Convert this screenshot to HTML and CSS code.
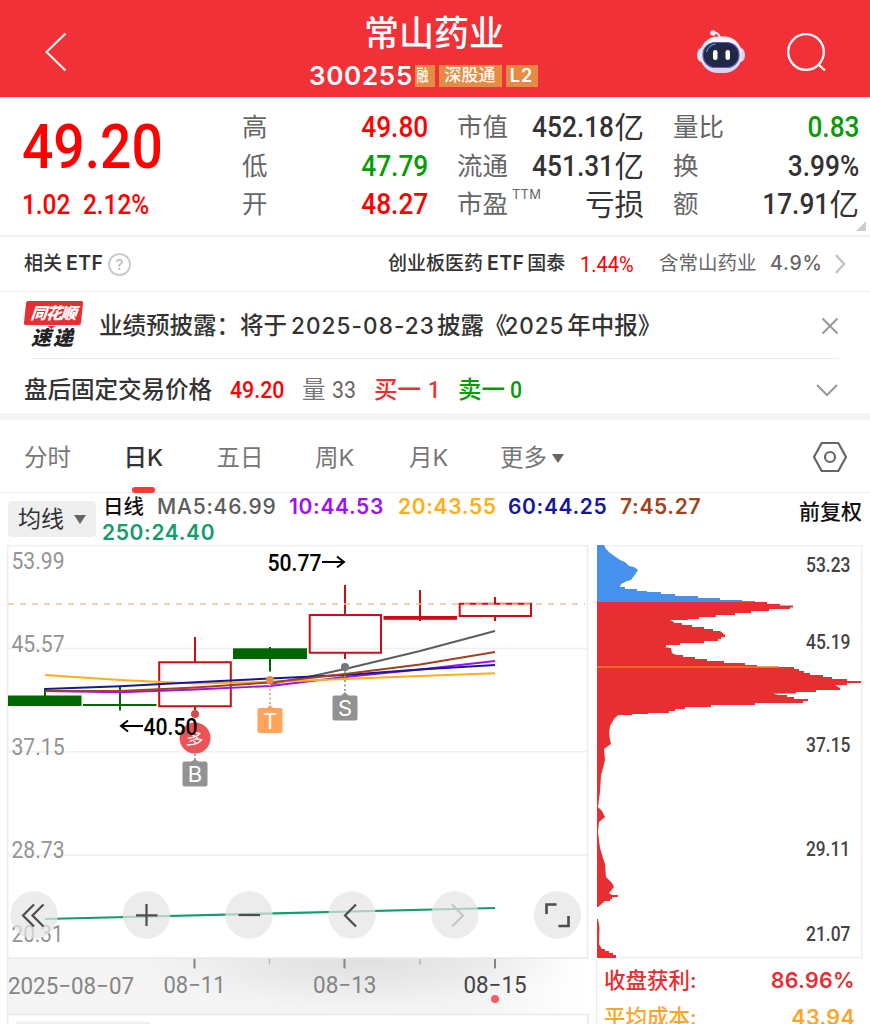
FILE: index.html
```html
<!DOCTYPE html>
<html lang="zh-CN">
<head>
  <meta charset="UTF-8" />
  <meta name="viewport" content="width=device-width, initial-scale=1" />
  <title>常山药业 300255</title>
  <link rel="stylesheet" href="styles.css">
</head>
<body>
  <header class="header">
    <svg class="back" width="24" height="40" viewBox="0 0 24 40"><path d="M21.500 1.500L2.500 20L21.500 38.500" /></svg>
    <div class="title">
      <h1>常山药业</h1>
      <div class="code">
        <span class="code-num">300255</span>
        <span class="tag tag-rong"><i>融</i></span>
        <span class="tag tag-sgt">深股通</span>
        <span class="tag tag-l2">L2</span>
      </div>
    </div>
    <div class="header-icons">
      <svg width="50" height="46" viewBox="0 0 50 46">
        <defs>
          <linearGradient id="head" x1="0" y1="0" x2="0" y2="1">
            <stop offset="0" stop-color="#fff" />
            <stop offset="1" stop-color="#d3d3f2" />
          </linearGradient>
        </defs>
        <path d="M17 4Q23 3 24 9" fill="none" stroke="#eceaf6" stroke-width="2" />
        <circle cx="17" cy="4" r="2.800" fill="#f5eef8" />
        <ellipse cx="5.500" cy="26" rx="4.500" ry="7" fill="#e4e2f7" />
        <ellipse cx="44.500" cy="26" rx="4.500" ry="7" fill="#d9d6f2" />
        <rect x="4" y="7.500" width="42" height="36.500" rx="18" fill="url(#head)" />
        <rect x="7" y="13.500" width="36" height="25" rx="12" fill="#202747" stroke="#6557c8" stroke-width="1.200" />
        <path d="M10.500 23Q12.500 16 19.500 15" fill="none" stroke="#68bcda" />
        <rect x="17" y="21" width="4.500" height="10" rx="2.200" fill="#fff" />
        <rect x="29.500" y="21" width="4.500" height="10" rx="2.200" fill="#fff" />
      </svg>
      <svg width="42" height="42" viewBox="0 0 42 42">
        <circle cx="20" cy="20" r="17.800" fill="none" stroke="#fff" stroke-width="2.300" />
        <path d="M32 32L39 38.500" stroke="#fff" stroke-width="2.300" />
      </svg>
    </div>
  </header>

  <section class="quote">
    <div class="price">
      <div class="price-main"><span class="num">49.20</span></div>
      <div class="price-chg"><span class="num">1.02</span><span class="num">2.12%</span></div>
    </div>
    <dl class="stats stats-a">
      <div><dt>高</dt><dd class="red"><span class="num">49.80</span></dd></div>
      <div><dt>低</dt><dd class="green"><span class="num">47.79</span></dd></div>
      <div><dt>开</dt><dd class="red"><span class="num">48.27</span></dd></div>
    </dl>
    <dl class="stats stats-b">
      <div><dt>市值</dt><dd><span class="num">452.18</span>亿</dd></div>
      <div><dt>流通</dt><dd><span class="num">451.31</span>亿</dd></div>
      <div><dt>市盈<sup>TTM</sup></dt><dd>亏损</dd></div>
    </dl>
    <dl class="stats stats-c">
      <div><dt>量比</dt><dd class="green"><span class="num">0.83</span></dd></div>
      <div><dt>换</dt><dd><span class="num">3.99%</span></dd></div>
      <div><dt>额</dt><dd><span class="num">17.91</span>亿</dd></div>
    </dl>
    <span class="corner"></span>
  </section>

  <section class="etf">
    <span class="etf-label">相关<b>ETF</b></span>
    <span class="help">?</span>
    <span class="etf-name">创业板医药<b>ETF</b>国泰</span>
    <span class="num etf-pct">1.44%</span>
    <span class="etf-has">含常山药业</span>
    <span class="etf-ratio">4.9%</span>
    <svg width="12" height="20" viewBox="0 0 12 20"><path d="M2 1L10 10L2 19" fill="none" stroke="#c4c4c4" stroke-width="2.500" /></svg>
  </section>

  <section class="news">
    <div class="logo">
      <span class="logo-top">同花顺</span>
      <span class="logo-bottom">速递</span>
    </div>
    <p>业绩预披露：将于<b class="news-date">2025-08-23</b>披露《<b class="news-year">2025</b>年中报》</p>
    <svg width="18" height="18" viewBox="0 0 18 18"><path d="M1.500 1.500L16.500 16.500M16.500 1.500L1.500 16.500" stroke="#999" stroke-width="2" /></svg>
  </section>

  <section class="after">
    <span class="after-label">盘后固定交易价格</span>
    <span class="num after-price">49.20</span>
    <span class="vol">量</span><span class="num vol-num">33</span>
    <span class="buy">买一</span><span class="num buy-num">1</span>
    <span class="sell">卖一</span><span class="num sell-num">0</span>
    <svg width="24" height="14" viewBox="0 0 24 14"><path d="M2 2L12 12L22 2" fill="none" stroke="#999" stroke-width="2" /></svg>
  </section>

  <nav class="tabs">
    <a>分时</a>
    <a class="active">日K</a>
    <a>五日</a>
    <a>周K</a>
    <a>月K</a>
    <a class="more">更多<i></i></a>
    <svg width="36" height="32" viewBox="0 0 36 32">
      <path d="M9.700 2H26.300L34 16L26.300 30H9.700L2 16Z" fill="none" stroke="#666" stroke-width="2.200" stroke-linejoin="round" />
      <circle cx="18" cy="16" r="5" fill="none" stroke="#666" stroke-width="2.200" />
    </svg>
  </nav>

  <section class="legend">
    <button class="ma-btn">均线<i></i></button>
    <div class="ma">
      <span class="ma-day">日线</span>
      <span class="ma5">MA5:46.99</span>
      <span class="ma10">10:44.53</span>
      <span class="ma20">20:43.55</span>
      <span class="ma60">60:44.25</span>
      <span class="ma7">7:45.27</span>
      <span class="ma250">250:24.40</span>
    </div>
    <span class="fq">前复权</span>
  </section>

  <main class="charts">
    <svg class="kline" width="590" height="479" viewBox="0 545 590 479">
      <defs>
        <linearGradient id="axisbg">
          <stop offset="0" stop-color="#f4f4f4" />
          <stop offset=".8" stop-color="#f4f4f4" />
          <stop offset="1" stop-color="#fff" />
        </linearGradient>
        <radialGradient id="shade" cx=".5" cy="0" r=".5" gradientTransform="scale(1 1.900)">
          <stop offset="0" stop-color="#d8d8d8" stop-opacity=".75" />
          <stop offset=".5" stop-color="#dedede" stop-opacity=".5" />
          <stop offset="1" stop-color="#e6e6e6" stop-opacity="0" />
        </radialGradient>
      </defs>

      <!-- grid -->
      <g stroke="#ececec" stroke-width="1.500" fill="none">
        <path d="M8 648.500H587M8 751.700H587M8 855H587" stroke="#f0f0f0" />
        <path d="M7.700 1024V545.500H587.500V958" />
      </g>
      <rect x="8" y="958" width="580" height="56" fill="url(#axisbg)" />
      <rect x="140" y="958" width="440" height="56" fill="url(#shade)" />
      <path d="M8 958H588M8 1014.500H588V1024" stroke="#e9e9e9" stroke-width="1.500" fill="none" />
      <rect x="15" y="1021.500" width="136" height="20" rx="4" fill="#efefef" />

      <g class="ylabels">
        <text x="11.500" y="568.500" textLength="53" lengthAdjust="spacingAndGlyphs">53.99</text>
        <text x="11.500" y="652" textLength="53" lengthAdjust="spacingAndGlyphs">45.57</text>
        <text x="11.500" y="755" textLength="53" lengthAdjust="spacingAndGlyphs">37.15</text>
        <text x="11.500" y="858" textLength="53" lengthAdjust="spacingAndGlyphs">28.73</text>
        <text x="11.500" y="942" textLength="52" lengthAdjust="spacingAndGlyphs">20.31</text>
      </g>

      <!-- candles -->
      <g fill="#006600">
        <rect x="8" y="695.500" width="73.500" height="10.500" />
        <rect x="44" y="688" width="2" height="9" />
        <rect x="83" y="704" width="73.500" height="2" />
        <rect x="119" y="687" width="2" height="23.500" />
        <rect x="233" y="648.300" width="74" height="10.700" />
        <rect x="269" y="647" width="2" height="24.500" />
      </g>
      <g fill="none" stroke="#cc0e14" stroke-width="2">
        <path d="M159.200 662.200H230.800V706.200H159.200ZM195 637V662M195 706V711" />
        <path d="M309.700 615H381V652.800H309.700ZM345 585V615M345 653V659" />
        <path d="M420 590V621" />
        <rect x="384.500" y="617" width="71.500" height="1.800" fill="#cc0e14" />
        <path d="M459.700 603.800H531V616H459.700ZM495 597V604M495 616V621" />
      </g>
      <path d="M8 604H585" stroke="#e5c7a0" stroke-width="1.500" stroke-dasharray="6 6" />

      <!-- moving averages -->
      <g fill="none" stroke-width="1.900">
        <path d="M270 684L308 677L345 669L420 651L495 631" stroke="#5c5c5c" />
        <path d="M45 691L120 692.300L195 689.500L270 686L345 677L420 669.500L495 661" stroke="#9a12f5" />
        <path d="M45 675L120 680L195 683.500L270 682L345 679L420 676L495 673.300" stroke="#ffae18" />
        <path d="M45 689L120 686.300L195 682.300L270 678.500L345 675L420 669.500L495 665" stroke="#17179a" />
        <path d="M45 691L120 691L195 687.500L270 682.500L345 674L420 664.500L495 652" stroke="#a1421b" />
        <path d="M45 919L495 908" stroke="#159c6c" stroke-width="2.200" />
      </g>

      <!-- trade marks -->
      <g class="marks">
        <circle cx="195" cy="714" r="4" fill="#d64a4d" />
        <circle cx="195" cy="738" r="15.500" fill="#ee5255" />
        <text class="duo" x="195" y="745" transform="rotate(8 195 738)">多</text>
        <path d="M195 746V760" stroke="#888" stroke-width="1.500" stroke-dasharray="2 2" />
        <path d="M191 762L195 759L199 762Z" fill="#929292" />
        <rect x="182.500" y="761.500" width="25" height="25" rx="2" fill="#929292" />
        <text x="195" y="782">B</text>
        <circle cx="270" cy="680" r="4" fill="#eb8a45" />
        <path d="M270 684V706" stroke="#f3a66a" stroke-width="1.800" stroke-dasharray="2 2.500" />
        <rect x="257.500" y="708" width="25" height="25" rx="2" fill="#ffa45a" />
        <path d="M266 709L270 705L274 709Z" fill="#ffa45a" />
        <text x="270" y="728.500">T</text>
        <circle cx="345" cy="667" r="4" fill="#777" />
        <path d="M345 671V694" stroke="#999" stroke-width="1.800" stroke-dasharray="2 2.500" />
        <rect x="332.500" y="695.500" width="25" height="25" rx="2" fill="#929292" />
        <path d="M341 696L345 692L349 696Z" fill="#929292" />
        <text x="345" y="716">S</text>
      </g>
      <g class="extremes">
        <text x="267.500" y="570.500" textLength="54" lengthAdjust="spacingAndGlyphs">50.77</text>
        <path d="M322 562H344M337 556.500L344 562L337 567.500" />
        <text x="143.500" y="734.500" textLength="54" lengthAdjust="spacingAndGlyphs">40.50</text>
        <path d="M143 726H121M128 720.500L121 726L128 731.500" />
      </g>

      <!-- floating buttons -->
      <g fill="#e4e4e4" fill-opacity=".72">
        <circle cx="34" cy="915" r="23.700" />
        <circle cx="146.500" cy="915" r="23.700" />
        <circle cx="249" cy="915" r="23.700" />
        <circle cx="352" cy="915" r="23.700" />
        <circle cx="455" cy="915" r="23.700" />
        <circle cx="557.500" cy="915" r="23.700" />
      </g>
      <g fill="none" stroke="#4c4c4c" stroke-width="2.200">
        <path d="M34 904.500L23 915.500L34 926.500M43.500 904.500L32.500 915.500L43.500 926.500" />
        <path d="M136 915.300H157.500M146.500 904V926" />
        <path d="M238.500 915H260" />
        <path d="M356 904.500L345 915.500L356 926.500" />
        <path d="M452 904.500L463 915.500L452 926.500" stroke="#c6c6c6" />
        <path d="M546.500 914V904.500H556.500M568.500 916V926H558.500" stroke-width="2.600" />
      </g>

      <!-- date axis -->
      <path d="M194.500 959V968.500M344.500 959V968.500M495 959V968.500" stroke="#858585" stroke-width="2" />
      <path d="M269.500 959V964.500M420 959V964.500" stroke="#b5b5b5" stroke-width="1.500" />
      <g class="dates">
        <text x="8" y="993.500" textLength="126" lengthAdjust="spacingAndGlyphs">2025−08−07</text>
        <text x="163.500" y="993" textLength="62" lengthAdjust="spacingAndGlyphs">08−11</text>
        <text x="313" y="993" textLength="63.500" lengthAdjust="spacingAndGlyphs">08−13</text>
        <text x="463.500" y="993" textLength="63" lengthAdjust="spacingAndGlyphs" class="today">08−15</text>
      </g>
      <circle cx="495" cy="999" r="4" fill="#f55b5f" />
    </svg>

    <div class="chips">
      <svg width="280" height="414" viewBox="590 545 280 414">
        <path d="M597 545.500H861.500V959M597 957.500H861.500" fill="none" stroke="#f0f0f0" stroke-width="1.500" />
        <path fill="#4690ee" d="M597 545H604L606 549L610 553L613 555L620 560L625 562L629 566L634 567L638 570L636 573L631 580L627 581L621 584L620 587H625V589H637V591H647V592H661V594H675V596H698V598H720V600H742V601H755V602H597Z" />
        <path fill="#e72e30" d="M597 602H767V604H780V605.500H793V607.500H790V609H769V611H751V613H735V615H716V617H699V619H688V620H670L674 622V623H682V625H692V627H704V629H713V631H720L725 635V637H721V639H718V641H704V643H680V645H666V647H664L671 648L672 653L676 655H683V657H695V659H707V661H724V663H745V665H757V667H794V669H799V671H804V673H810V675H823V677H832V679H847V681H861V683H847V685H835L840 688V690H816V692H796V693.500H773L778 695H787V697H794V699H808V701H803V703H755V705H711V707H685V709H675V711H669V713H648V714H632V715H618L614 719L610 726L609 733L610 740L611 744L604 749L605 760L603 768L601 775L600 792L598 807L602 811L605 817L599 822L598 832L600 848L603 858L605 864L606 877L612 883L614 887L609 893L612 895H618V897H612V899H610V901H605L598 907H597Z" />
        <path fill="#e72e30" d="M597 919H598L599.500 928L599 944L602 949H605V951H609V953H613V955H616V958H597Z" />
        <path d="M597 667H779" stroke="#fb7b21" stroke-width="1.700" />
        <g class="chip-labels">
          <text x="806" y="571.500" textLength="44.500" lengthAdjust="spacingAndGlyphs">53.23</text>
          <text x="806" y="649" textLength="44.500" lengthAdjust="spacingAndGlyphs">45.19</text>
          <text x="806" y="752" textLength="44.500" lengthAdjust="spacingAndGlyphs">37.15</text>
          <text x="806" y="855.500" textLength="44" lengthAdjust="spacingAndGlyphs">29.11</text>
          <text x="806" y="941" textLength="44.500" lengthAdjust="spacingAndGlyphs">21.07</text>
        </g>
      </svg>
      <div class="chip-row profit"><span>收盘获利:</span><b>86.96%</b></div>
      <div class="chip-row cost"><span>平均成本:</span><b>43.94</b></div>
    </div>
  </main>
</body>
</html>
```
FILE: styles.css
```css
* {
  box-sizing: border-box;
}

body {
  margin: 0;
  width: 870px;
  height: 1024px;
  overflow: hidden;
  background: #fff;
  color: #333;
  font-family: Inter, "Noto Sans CJK SC", sans-serif;
  font-size: 24px;
  line-height: 1;
}

h1, p, dl, dd {
  margin: 0;
}

b {
  font-weight: 600;
}

i {
  font-style: normal;
}

svg {
  display: block;
  flex: none;
}

.red {
  color: #ff0000;
}

.green {
  color: #089b08;
}

/* narrow digits */
.num {
  display: inline-block;
  font-family: Roboto, sans-serif;
  font-weight: 500;
  transform: scaleX(.89);
  transform-origin: left;
}

/* header */
.header {
  display: grid;
  grid-template-columns: 300px 1fr 174px;
  height: 97px;
  background: #f23038;
  color: #fff;
}

.back {
  margin: 32px 0 0 44px;
  fill: none;
  stroke: #fff;
  stroke-width: 2;
}

.title h1 {
  padding: 15px 0 0 64px;
  font-size: 35px;
  font-weight: 500;
  line-height: 36px;
  white-space: nowrap;
}

.code {
  display: flex;
  align-items: center;
  padding: 12px 0 0 9px;
  line-height: 26px;
}

.code-num {
  width: 105.5px;
  font-size: 26px;
  font-weight: 600;
  letter-spacing: .7px;
  white-space: nowrap;
}

.tag {
  height: 22px;
  background: #e68b43;
  font-size: 17px;
  font-weight: 500;
  line-height: 21px;
  text-align: center;
  white-space: nowrap;
}

.tag-rong {
  width: 20px;
  margin-right: 4px;
}

.tag-rong i {
  display: block;
  font-size: 16px;
  transform: scaleX(.75);
  transform-origin: left;
}

.tag-sgt {
  width: 63px;
  margin-right: 4px;
}

.tag-l2 {
  width: 32px;
  font-size: 18px;
  font-weight: 600;
  letter-spacing: 1px;
}

.header-icons {
  display: flex;
  gap: 40px;
  padding-top: 29px;
}

.header-icons svg + svg {
  margin-top: 3px;
}

/* quote */
.quote {
  position: relative;
  display: flex;
  height: 140px;
  border-bottom: 2px solid #f1f1f1;
}

.price {
  width: 242px;
  padding: 17px 0 0 22px;
  color: #ff0000;
}

.price-main {
  height: 64px;
  font-size: 62px;
  line-height: 64px;
}

.price-chg {
  display: flex;
  gap: 5px;
  padding-top: 11px;
  font-size: 28px;
  line-height: 32px;
}

.price-chg .num {
  transform: scaleX(.87);
}

.stats {
  padding-top: 11px;
}

.stats > div {
  display: flex;
  justify-content: space-between;
  align-items: center;
  height: 38.5px;
}

.stats dt {
  color: #666;
  font-size: 25.5px;
  line-height: 38px;
  white-space: nowrap;
}

.stats dd {
  display: flex;
  align-items: center;
  font-size: 29.5px;
  line-height: 38px;
  white-space: nowrap;
}

.stats .num {
  transform-origin: right;
}

.stats-a {
  width: 186px;
}

.stats-b {
  width: 187px;
  margin-left: 29px;
}

.stats-c {
  width: 186px;
  margin-left: 29px;
}

.stats sup {
  position: relative;
  top: -5px;
  margin-left: 4px;
  font-size: 13px;
  letter-spacing: .2px;
  line-height: 0;
}

.corner {
  position: absolute;
  right: 4px;
  bottom: 4px;
  border-left: 10px solid transparent;
  border-bottom: 10px solid #ccc;
}

/* related etf */
.etf {
  display: flex;
  align-items: center;
  height: 55px;
  padding-left: 24px;
  border-bottom: 1.5px solid #efefef;
  font-size: 19px;
  font-weight: 500;
  white-space: nowrap;
}

.etf b {
  margin-left: 4px;
  font-size: 19.5px;
  letter-spacing: .4px;
}

.etf-label {
  width: 84px;
}

.help {
  width: 23px;
  height: 23px;
  border: 2px solid #ccc;
  border-radius: 50%;
  color: #bbb;
  font-size: 15px;
  line-height: 19px;
  text-align: center;
}

.etf-name {
  width: 192px;
  margin-left: 257px;
}

.etf-name b {
  margin-right: 3px;
}

.etf-pct {
  width: 79px;
  color: #ff0000;
  font-size: 22.5px;
  font-weight: 400;
}

.etf-has {
  width: 111px;
  color: #666;
  font-weight: 400;
  font-size: 19.5px;
}

.etf-ratio {
  width: 64px;
  color: #666;
  font-size: 19.5px;
  font-weight: 500;
  letter-spacing: .8px;
}

/* news */
.news {
  display: flex;
  align-items: center;
  height: 67px;
  margin: 0 31px 0 25px;
  background: linear-gradient(#ececec, #ececec) 7px 100% / 100% 1.5px no-repeat;
}

.logo {
  display: flex;
  flex-direction: column;
  width: 57px;
  height: 50px;
  margin-right: 17px;
  font-style: italic;
  font-weight: 900;
}

.logo-top {
  position: relative;
  height: 25px;
  background: #e72e32;
  border-radius: 2px;
  color: #fff;
  font-size: 16px;
  line-height: 24px;
  letter-spacing: -1px;
  text-align: center;
  transform: skewX(-6deg);
}

.logo-top::after {
  content: "";
  position: absolute;
  left: 24px;
  top: 25px;
  border: 4px solid transparent;
  border-top: 3px solid #e72e32;
  border-bottom: 0;
}

.logo-bottom {
  padding-left: 6px;
  color: #222;
  font-size: 20px;
  line-height: 27px;
  letter-spacing: 2px;
}

.news p {
  flex: 1;
  font-size: 23.5px;
  font-weight: 500;
  white-space: nowrap;
}

.news b {
  font-size: 22.5px;
  font-weight: 500;
}

.news .news-date {
  margin: 0 2px 0 4px;
  letter-spacing: 1.1px;
}

.news .news-year {
  margin: 0 3px 0 -3px;
  letter-spacing: .9px;
}

/* after hours */
.after {
  display: flex;
  align-items: center;
  height: 61px;
  padding: 1px 31px 0 24px;
  box-shadow: inset 0 -7px #f4f4f4;
  font-size: 23.5px;
  white-space: nowrap;
}

.after-label {
  width: 206px;
  font-weight: 500;
}

.after .num {
  font-size: 24.5px;
  transform: scaleX(.87);
}

.after-price {
  width: 72px;
  color: #ff0000;
}

.vol {
  width: 30px;
  color: #777;
}

.after .vol-num {
  width: 42px;
  color: #666;
  font-weight: 400;
}

.buy {
  width: 54px;
  color: #e93030;
  font-weight: 500;
}

.buy-num {
  width: 30px;
  color: #e93030;
}

.sell {
  width: 52px;
  color: #089b08;
  font-weight: 500;
}

.sell-num {
  color: #089b08;
}

.after svg {
  margin-left: auto;
}

/* tabs */
.tabs {
  display: flex;
  align-items: center;
  height: 73px;
  padding: 2px 22px 0 24px;
  border-bottom: 1.5px solid #efefef;
  color: #777;
  font-size: 23.5px;
  white-space: nowrap;
}

.tabs a {
  width: 97.5px;
  line-height: 71px;
}

.tabs a.active {
  position: relative;
  width: 95px;
  padding-left: 2px;
  color: #333;
  font-weight: 500;
}

.active::after {
  content: "";
  position: absolute;
  left: 10px;
  bottom: 0;
  width: 23px;
  height: 6px;
  border-radius: 3px;
  background: #fa3a35;
}

.tabs a:nth-child(3) {
  width: 98.5px;
}

.tabs a:nth-child(4) {
  width: 94px;
}

.tabs a:nth-child(5) {
  width: 91px;
}

.tabs svg {
  margin-left: auto;
}

.more i,
.ma-btn i {
  display: inline-block;
  margin-left: 5px;
  border: 6.5px solid transparent;
  border-top: 9px solid #666;
  border-bottom: 0;
  vertical-align: 3px;
}

/* legend */
.legend {
  display: flex;
  height: 52px;
  padding: 0 8px;
}

.ma-btn {
  width: 88px;
  height: 36px;
  margin: 8px 7px 0 0;
  padding: 0;
  border: 0;
  border-radius: 4px;
  background: #efefef;
  color: #333;
  font-family: inherit;
  font-size: 23px;
  line-height: 36px;
  white-space: nowrap;
}

.ma-btn i {
  margin-left: 10px;
}

.ma {
  display: flex;
  flex-wrap: wrap;
  align-content: flex-start;
  width: 610px;
  padding-top: 1px;
  font-size: 21px;
  font-weight: 600;
  letter-spacing: .65px;
  line-height: 25.5px;
}

.ma-day {
  width: 54px;
  color: #111;
  font-size: 20.5px;
  font-weight: 500;
  letter-spacing: 0;
}

.ma5 {
  width: 132px;
  color: #5c5c5c;
  font-weight: 500;
  letter-spacing: .8px;
}

.ma10 {
  width: 109px;
  color: #9a12f5;
}

.ma20 {
  width: 110px;
  color: #ffae18;
}

.ma60 {
  width: 112px;
  color: #17179a;
}

.ma7 {
  color: #a1421b;
}

.ma250 {
  margin-left: -1px;
  color: #159c6c;
}

.fq {
  margin-left: auto;
  color: #111;
  font-size: 21px;
  font-weight: 500;
  line-height: 37px;
}

/* charts */
.charts {
  display: flex;
}

.kline text,
.chips text {
  font-family: Roboto, sans-serif;
  font-size: 23.5px;
}

.ylabels {
  fill: #949494;
}

.kline .marks text {
  fill: #fff;
  font-family: Inter, "Noto Sans CJK SC", sans-serif;
  font-size: 22px;
  text-anchor: middle;
}

.kline .marks .duo {
  font-size: 17px;
}

.extremes text {
  fill: #000;
  font-weight: 500;
}

.extremes path {
  fill: none;
  stroke: #000;
  stroke-width: 2;
}

.dates {
  fill: #858585;
}

.dates .today {
  fill: #444;
}

.chips .chip-labels text {
  fill: #444;
  font-size: 20.5px;
  font-weight: 500;
}

.chip-row {
  display: flex;
  justify-content: space-between;
  height: 37px;
  margin-left: 6px;
  padding: 0 15px 0 7px;
  border-left: 1.5px solid #ececec;
  font-size: 21.5px;
  font-weight: 500;
  line-height: 42px;
}

.chip-row b {
  font-size: 21.5px;
  letter-spacing: .3px;
}

.profit {
  color: #e72e30;
}

.cost {
  color: #fba52b;
}
```
